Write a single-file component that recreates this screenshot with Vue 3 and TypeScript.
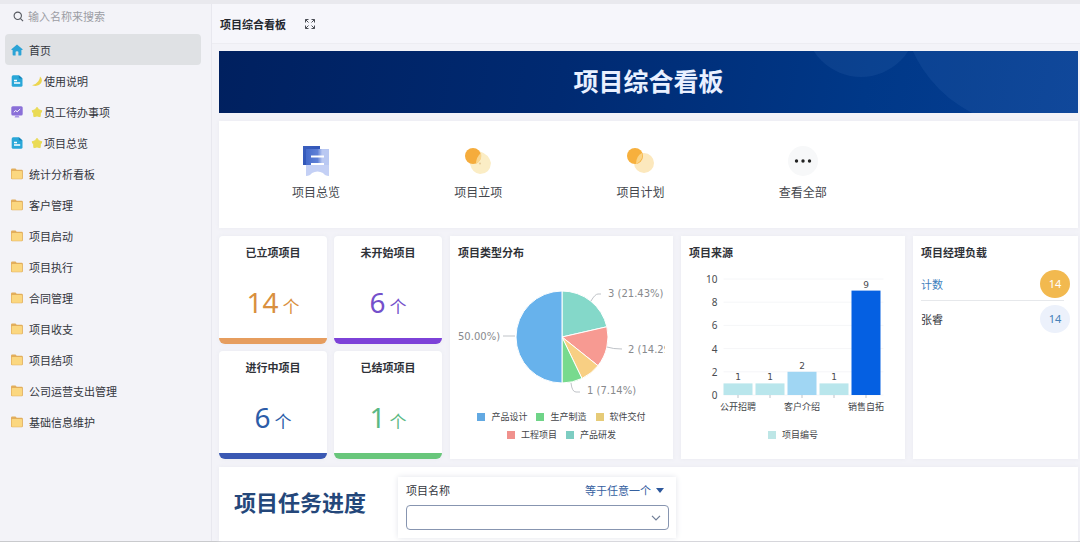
<script setup lang="ts">
import { ref } from 'vue'

type IconKind = 'home' | 'doc' | 'board' | 'folder'
interface NavItem { label: string; icon: IconKind; mark?: 'moon' | 'star' }

const navItems: NavItem[] = [
  { label: '首页', icon: 'home' },
  { label: '使用说明', icon: 'doc', mark: 'moon' },
  { label: '员工待办事项', icon: 'board', mark: 'star' },
  { label: '项目总览', icon: 'doc', mark: 'star' },
  { label: '统计分析看板', icon: 'folder' },
  { label: '客户管理', icon: 'folder' },
  { label: '项目启动', icon: 'folder' },
  { label: '项目执行', icon: 'folder' },
  { label: '合同管理', icon: 'folder' },
  { label: '项目收支', icon: 'folder' },
  { label: '项目结项', icon: 'folder' },
  { label: '公司运营支出管理', icon: 'folder' },
  { label: '基础信息维护', icon: 'folder' },
]
const active = ref('首页')
const keyword = ref('')
const projectName = ref('')

const shortcuts = [
  { label: '项目总览', icon: 'overview' },
  { label: '项目立项', icon: 'start' },
  { label: '项目计划', icon: 'plan' },
  { label: '查看全部', icon: 'more' },
]

const stats = [
  { title: '已立项项目', value: 14, tone: 'orange' },
  { title: '未开始项目', value: 6, tone: 'purple' },
  { title: '进行中项目', value: 6, tone: 'blue' },
  { title: '已结项项目', value: 1, tone: 'green' },
]

const pieData = [
  { name: '产品研发', value: 3, color: '#84d8c9' },
  { name: '工程项目', value: 2, color: '#f79a92' },
  { name: '软件交付', value: 1, color: '#f8cf83' },
  { name: '生产制造', value: 1, color: '#78da8e' },
  { name: '产品设计', value: 7, color: '#67b2ec' },
]
const pie = { cx: 104, cy: 69, r: 46 }
const total = pieData.reduce((sum, d) => sum + d.value, 0)
function pointAt(share: number): string {
  const angle = share * Math.PI * 2
  return `${(pie.cx + pie.r * Math.sin(angle)).toFixed(2)} ${(pie.cy - pie.r * Math.cos(angle)).toFixed(2)}`
}
let passed = 0
const slices = pieData.map((d) => {
  const from = passed / total
  passed += d.value
  return { color: d.color, path: `M${pie.cx} ${pie.cy}L${pointAt(from)}A${pie.r} ${pie.r} 0 0 1 ${pointAt(passed / total)}Z` }
})
const pieLegend = [
  { name: '产品设计', color: '#62a9e2' },
  { name: '生产制造', color: '#6fd488' },
  { name: '软件交付', color: '#e6cb78' },
  { name: '工程项目', color: '#f0918d' },
  { name: '产品研发', color: '#7dcdc2' },
]

const unit = 11.6
const baseY = 127
const bars = [
  { name: '公开招聘', value: 1, color: '#b9e6ec' },
  { name: '', value: 1, color: '#b9e6ec' },
  { name: '客户介绍', value: 2, color: '#a0d6f3' },
  { name: '', value: 1, color: '#b9e6ec' },
  { name: '销售自拓', value: 9, color: '#0560e2' },
].map((b, i) => ({ ...b, x: 34 + i * 32, y: baseY - b.value * unit, height: b.value * unit }))
const ticks = [0, 2, 4, 6, 8, 10].map((v) => ({ value: v, y: baseY - v * unit }))
</script>

<template>
  <div class="app">
    <aside class="sidebar">
      <label class="search">
        <svg viewBox="0 0 12 12" aria-hidden="true"><circle cx="5.2" cy="5.2" r="4" /><path d="M8.2 8.2 11 11" /></svg>
        <input v-model="keyword" type="search" placeholder="输入名称来搜索" aria-label="输入名称来搜索" />
      </label>
      <nav class="nav">
        <a v-for="item in navItems" :key="item.label" href="#" class="nav-item" :class="{ active: active === item.label }" @click.prevent="active = item.label">
          <svg v-if="item.icon === 'home'" class="nav-icon" viewBox="0 0 12 12"><path fill="#2ba3d6" d="M6 .5 11.6 5.3q.4.7-.5.8H10.400V10.500q0 .9-.9.9H7.400V8Q7.400 7.200 6 7.200T4.600 8v3.400H2.500q-.9 0-.9-.9V6.100H.9Q0 6 .4 5.300Z" /></svg>
          <svg v-else-if="item.icon === 'doc'" class="nav-icon" viewBox="0 0 12 12"><path fill="#2aa7d8" d="M2.200.3h5.600l3.700 3.200v6.700q0 1.500-1.500 1.500H2.200Q.7 11.700.7 10.200V1.800Q.7.300 2.200.300Z" /><path fill="#1583b9" d="M7.800.3v2.200q0 1 1 1h2.700Z" /><path stroke="#fff" stroke-width="1.300" d="M3 5.500h3M3 8h6.200" /></svg>
          <svg v-else-if="item.icon === 'board'" class="nav-icon" viewBox="0 0 12 12"><rect x=".3" y=".3" width="11.400" height="9.200" rx="1.500" fill="#8a6fd8" /><path fill="#a893e6" d="M4.500 9.500h3l1 2H3.500Z" /><path fill="none" stroke="#fff" stroke-width="1" d="M2.800 6.300 4.700 4.500 6.200 5.800 9.200 3" /></svg>
          <svg v-else class="nav-icon" viewBox="0 0 12 12"><path fill="#e2ae5c" d="M1.200.5h3.300L5.700 1.700h5q1.200 0 1.200 1.200v7.200q0 1.200-1.200 1.200H1.200Q0 11.300 0 10.100V1.700Q0 .5 1.200.5Z" /><rect x=".7" y="2.900" width="10.400" height="7.800" rx=".8" fill="#fbd780" /></svg>
          <svg v-if="item.mark === 'moon'" class="mark" viewBox="0 0 12 12"><path fill="#ecd54f" d="M9 1.500Q12.200 4.500 10 8.200 6.800 12.400 1 10.200 5.500 9 7.300 6.200 9 4 9 1.500Z" /></svg>
          <svg v-else-if="item.mark === 'star'" class="mark" viewBox="0 0 12 12"><path fill="#eadb55" stroke="#eadb55" stroke-width="1" stroke-linejoin="round" d="m6 1.300 1.900 2.500 3 1-1.600 2.900-.2 3L6 9.900l-3.100.8-.2-3L1.100 4.800l3-1Z" /></svg>
          <span>{{ item.label }}</span>
        </a>
      </nav>
    </aside>

    <main class="main">
      <header class="topbar">
        <h1>项目综合看板</h1>
        <button type="button" class="expand" aria-label="全屏">
          <svg viewBox="0 0 12 12"><path d="M4.500 1.500h-3v3M1.500 1.500l3 3M7.500 1.500h3v3M10.500 1.500l-3 3M4.500 10.500h-3v-3M1.500 10.500l3-3M7.500 10.500h3v-3M10.500 10.500l-3-3" /></svg>
        </button>
      </header>

      <div class="content">
        <section class="banner">
          <svg class="banner-art" viewBox="0 0 859 62" preserveAspectRatio="xMaxYMid slice" aria-hidden="true">
            <circle cx="642" cy="-30" r="56" /><circle cx="812" cy="-54" r="130" />
          </svg>
          <h2>项目综合看板</h2>
        </section>

        <section class="card shortcuts">
          <button v-for="s in shortcuts" :key="s.label" type="button" class="shortcut">
            <svg v-if="s.icon === 'overview'" viewBox="0 0 32 32">
              <defs>
                <linearGradient id="ov-back" x1="0" y1="0" x2="1" y2="1"><stop offset="0" stop-color="#3b5fbe" /><stop offset="1" stop-color="#2a50b4" /></linearGradient>
                <linearGradient id="ov-front" x1="0" y1="0" x2="1" y2="0"><stop offset="0" stop-color="#456bcb" /><stop offset=".5" stop-color="#5f80d6" /><stop offset=".7" stop-color="#b9c8f2" /></linearGradient>
              </defs>
              <rect x="3" y="1" width="17" height="19" fill="url(#ov-back)" />
              <path fill="url(#ov-front)" d="M6 4h23v17H6Z" />
              <path fill="#c4d0f5" d="M6 20h23v11q-4 0-6-3-5.500-3-11 0-2 3-6 3Z" />
              <path stroke="#fff" stroke-width="2" d="M11 11.500h13M11 19h13" />
            </svg>
            <svg v-else-if="s.icon === 'start'" viewBox="0 0 32 32">
              <path fill="#fbedc5" d="M17 6q10 3 12 12-1 11-11 11-8-1-10-10Z" /><circle cx="11" cy="11" r="8" fill="#f5ac3c" /><path fill="#f9d68f" d="M19 8q2 7-5 11 0-7 5-11Z" /><circle cx="18" cy="18.500" r="1" fill="#e3c998" />
            </svg>
            <svg v-else-if="s.icon === 'plan'" viewBox="0 0 32 32">
              <circle cx="20" cy="18" r="10" fill="#fce8bd" /><circle cx="11" cy="11" r="8" fill="#f7b03d" /><path fill="#fad487" d="M18 8q2 7-6 11 0-8 6-11Z" />
            </svg>
            <svg v-else viewBox="0 0 32 32">
              <circle cx="16" cy="16" r="15" fill="#f7f8f9" /><circle cx="9.500" cy="16" r="1.700" fill="#222" /><circle cx="16" cy="16" r="1.700" fill="#222" /><circle cx="22.500" cy="16" r="1.700" fill="#222" />
            </svg>
            <span>{{ s.label }}</span>
          </button>
        </section>

        <div class="widgets">
          <div class="stats">
            <section v-for="s in stats" :key="s.title" class="card stat" :class="s.tone">
              <h3>{{ s.title }}</h3>
              <p><strong>{{ s.value }}</strong><span>个</span></p>
            </section>
          </div>

          <section class="card panel">
            <h3>项目类型分布</h3>
            <svg class="chart pie" viewBox="0 0 207 136" role="img" aria-label="项目类型分布">
              <path v-for="s in slices" :key="s.color" :d="s.path" :fill="s.color" stroke="#fff" stroke-width="1" />
              <g class="leaders">
                <path d="M133 33Q137 26 140 26H143M149 79Q155 81 164 81M113 115Q114 124 118 124H122M57 68Q51 68 45 68" />
              </g>
              <g class="pie-labels">
                <text x="150" y="29">3 (21.43%)</text>
                <text x="170" y="85">2 (14.29</text>
                <text x="129" y="126">1 (7.14%)</text>
                <text x="0" y="72">50.00%)</text>
              </g>
            </svg>
            <ul class="legend">
              <li v-for="l in pieLegend" :key="l.name"><i :style="{ background: l.color }"></i>{{ l.name }}</li>
            </ul>
          </section>

          <section class="card panel">
            <h3>项目来源</h3>
            <svg class="chart bar" viewBox="0 0 207 152" role="img" aria-label="项目来源">
              <g v-for="t in ticks" :key="t.value">
                <path class="grid-line" :d="`M34 ${t.y}H194`" />
                <text class="tick" x="28" :y="t.y + 4" text-anchor="end">{{ t.value }}</text>
              </g>
              <g v-for="(b, i) in bars" :key="i">
                <rect :x="b.x" :y="b.y" width="29" :height="b.height" :fill="b.color" />
                <path class="tick-mark" :d="`M${b.x + 14.5} ${baseY}v3`" />
                <text class="bar-value" :x="b.x + 14.5" :y="b.y - 3" text-anchor="middle">{{ b.value }}</text>
                <text v-if="b.name" class="bar-name" :x="b.x + 14.5" :y="baseY + 15" text-anchor="middle">{{ b.name }}</text>
              </g>
            </svg>
            <ul class="legend">
              <li><i class="swatch-cyan"></i>项目编号</li>
            </ul>
          </section>

          <section class="card panel">
            <h3>项目经理负载</h3>
            <ul class="load">
              <li class="sum"><span>计数</span><b>14</b></li>
              <li><span>张睿</span><b>14</b></li>
            </ul>
          </section>
        </div>

        <section class="card progress">
          <h2>项目任务进度</h2>
          <div class="filter">
            <div class="filter-head">
              <label for="project-name">项目名称</label>
              <div class="operator">
                <select aria-label="筛选条件"><option>等于任意一个</option></select>
                <svg viewBox="0 0 8 5" aria-hidden="true"><path d="M0 0h8L4 5Z" /></svg>
              </div>
            </div>
            <div class="picker">
              <select id="project-name" v-model="projectName"><option value=""></option></select>
              <svg viewBox="0 0 10 6" aria-hidden="true"><path d="M1 .8 5 5 9 .8" /></svg>
            </div>
          </div>
        </section>
      </div>
    </main>
  </div>
</template>

<style>
body { background: #f3f3f8; }
</style>

<style scoped>
* { box-sizing: border-box; }
h1, h2, h3, p, ul { margin: 0; padding: 0; }
ul { list-style: none; }
button, input, select { font: inherit; color: inherit; border: 0; background: none; padding: 0; margin: 0; outline: none; }
select { appearance: none; }
svg { display: block; flex: none; }

.app {
  display: flex;
  min-height: 100vh;
  border-top: 4px solid #e9e9ee;
  border-bottom: 1px solid #c9cacd;
  background: #f3f3f8;
  color: #33363d;
  font-family: "Noto Sans CJK SC", sans-serif;
  font-size: 11px;
  line-height: 16px;
}

.sidebar { flex: none; width: 212px; padding: 0 10px 0 5px; border-right: 1px solid #e8e8ef; }
.search { display: flex; align-items: center; gap: 4px; height: 24px; margin-bottom: 6px; padding-left: 8px; }
.search svg { width: 11px; height: 11px; fill: none; stroke: #55585f; stroke-width: 1.2; }
.search input { flex: 1; min-width: 0; }
.search input::placeholder { color: #9c9da4; opacity: 1; }
.nav { display: flex; flex-direction: column; }
.nav-item { display: flex; align-items: center; height: 31px; padding-left: 6px; border-radius: 4px; color: #33363d; text-decoration: none; }
.nav-item.active { background: #dfe1e4; }
.nav-icon { width: 12px; height: 12px; margin-right: 6px; }
.mark { width: 12px; height: 12px; margin: 0 1px 0 2px; }

.main { flex: 1; min-width: 0; display: flex; flex-direction: column; }
.topbar { display: flex; align-items: center; gap: 18px; height: 40px; padding-left: 8px; background: #f6f6fb; border-bottom: 1px solid #ededf2; }
.topbar h1 { font-size: 11px; font-weight: 700; color: #24272e; }
.expand svg { width: 12px; height: 12px; fill: none; stroke: #4a4d54; stroke-width: 1; }
.content { flex: 1; display: flex; flex-direction: column; gap: 8px; padding: 7px 2px 0 7px; }
.card { background: #fff; box-shadow: 0 0 4px #e9eaf0; }

.banner { position: relative; display: flex; align-items: center; justify-content: center; height: 62px; padding-bottom: 4px; overflow: hidden; background: linear-gradient(100deg, #00205f, #002a72 40%, #003888 75%, #063f94); }
.banner-art { position: absolute; inset: 0; width: 100%; height: 100%; fill: #5b8fd0; fill-opacity: 0.12; }
.banner h2 { position: relative; font-size: 25px; line-height: 32px; font-weight: 700; color: #e9f0ff; }

.shortcuts { display: grid; grid-template-columns: repeat(5, 1fr); height: 107px; padding: 0 32px 4px 16px; }
.shortcut { display: flex; flex-direction: column; align-items: center; justify-content: center; gap: 7px; font-size: 12px; color: #44474d; }
.shortcut svg { width: 32px; height: 32px; }

.widgets { display: grid; grid-template-columns: 223fr 223fr 224fr 165fr; gap: 8px; }
.stats { display: grid; grid-template-columns: 1fr 1fr; gap: 7px; }
h3 { font-size: 11px; line-height: 16px; font-weight: 700; color: #2f3238; }
.stat { display: flex; flex-direction: column; align-items: center; height: 108px; padding-top: 8px; border-radius: 4px 4px 6px 6px; border-bottom: 6px solid; overflow: hidden; }
.stat p { display: flex; flex: 1; align-items: baseline; gap: 4px; padding-top: 22px; line-height: 40px; }
.stat strong { font-family: "Noto Sans", sans-serif; font-size: 28px; font-weight: 400; }
.stat p span { font-size: 17px; }
.orange { border-color: #e69d5e; }
.orange p { color: #d9903f; }
.purple { border-color: #7d42d8; }
.purple p { color: #7450cb; }
.blue { border-color: #3a58b3; }
.blue p { color: #2c5ca8; }
.green { border-color: #68c67b; }
.green p { color: #5bb984; }

.panel { min-width: 0; padding: 8px; }
.chart { width: 100%; margin-top: 8px; overflow: hidden; }
.pie { height: 136px; }
.bar { height: 152px; }
.leaders path { fill: none; stroke: #bfc3c8; stroke-width: 1; }
.pie-labels text { font: 10px "DejaVu Sans", sans-serif; fill: #888a8e; }
.grid-line { stroke: #f5f6f8; }
.tick-mark { stroke: #bcc3ca; }
.tick { font: 10px "Noto Sans", sans-serif; fill: #4a4c50; }
.bar-value { font: 9px "DejaVu Sans", sans-serif; fill: #4a4c50; }
.bar-name { font-size: 9px; fill: #44464a; }
.legend { display: flex; flex-wrap: wrap; justify-content: center; gap: 4px 9px; margin-top: 6px; font-size: 9px; line-height: 14px; color: #44464a; }
.bar + .legend { margin-top: 8px; }
.legend li { display: flex; align-items: center; gap: 6px; }
.legend i { width: 8px; height: 8px; }
.swatch-cyan { background: #bde6e6; }

.load { margin-top: 6px; }
.load li { display: flex; align-items: center; justify-content: space-between; height: 35px; }
.load .sum { color: #3f7fbd; background: linear-gradient(#e6e8eb, #e6e8eb) left bottom / calc(100% - 6px) 1px no-repeat; }
.load b { display: grid; place-items: center; width: 30px; height: 28px; border-radius: 50%; background: #ecf1fb; color: #4681b9; font-family: "Noto Sans", sans-serif; font-weight: 400; }
.load .sum b { background: #f2b94f; color: #fff; }

.progress { flex: 1; display: flex; align-items: flex-start; gap: 32px; padding: 10px 15px 3px; }
.progress h2 { padding-top: 8px; font-size: 22px; line-height: 32px; font-weight: 700; color: #24477a; }
.filter { width: 278px; padding: 5px 7px 8px 8px; box-shadow: 0 0 6px #e2e4ea; }
.filter-head { display: flex; justify-content: space-between; margin-bottom: 7px; line-height: 16px; }
.operator { display: flex; align-items: center; gap: 5px; padding-right: 5px; color: #35609f; }
.operator svg { width: 8px; height: 5px; fill: #2d589c; }
.picker { display: grid; align-items: center; }
.picker select { grid-area: 1 / 1; width: 100%; height: 25px; border: 1px solid #8795b0; border-radius: 4px; background: #fff; padding: 0 24px 0 8px; }
.picker svg { grid-area: 1 / 1; justify-self: end; width: 10px; height: 6px; margin-right: 8px; fill: none; stroke: #6f7d96; stroke-width: 1.2; pointer-events: none; }
</style>
